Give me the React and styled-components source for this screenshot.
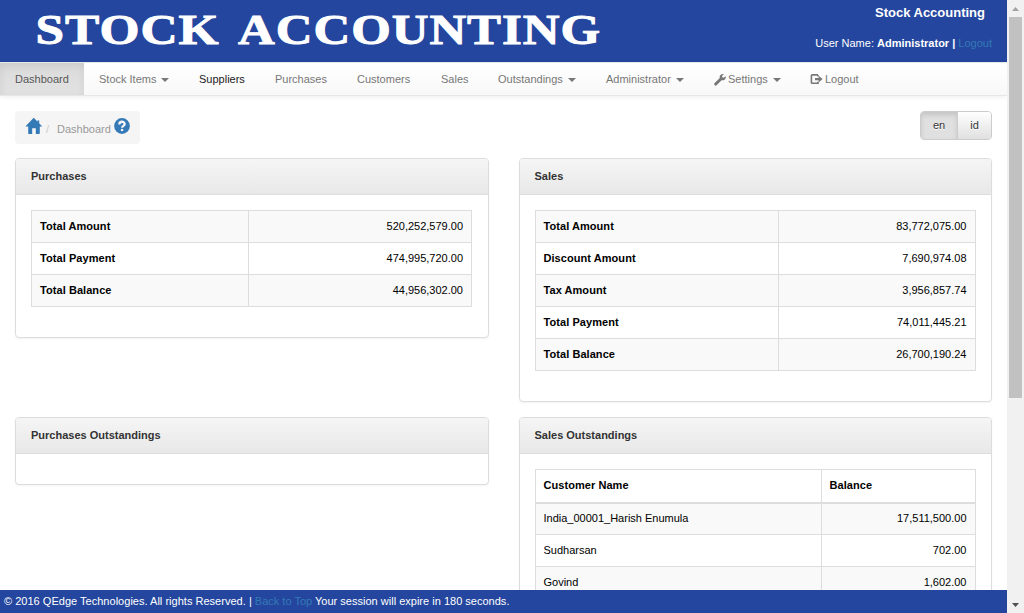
import React from "react";
import styled, { createGlobalStyle } from "styled-components";

const Global = createGlobalStyle`
  *, *::before, *::after { box-sizing: border-box; }
  html, body { margin: 0; height: 100%; overflow: hidden; }
  body {
    background: #fff;
    color: #000;
    font: 11px/15px "Liberation Sans", Arial, sans-serif;
  }
`;

const Window = styled.div`
  display: flex;
  width: 1024px;
  height: 613px;
`;

const Page = styled.div`
  display: flex;
  flex-direction: column;
  width: 1007px;
  height: 613px;
`;

const Header = styled.header`
  display: flex;
  flex: none;
  justify-content: space-between;
  height: 62px;
  background: #24469e;
  color: #fff;
`;

const LogoArt = styled.svg`
  display: block;
  width: 640px;
  height: 62px;
  fill: #fff;
  stroke: #fff;
  stroke-width: 0.9px;
  font-family: "Liberation Serif", "Times New Roman", serif;
  font-weight: 700;
`;

const Account = styled.div`
  display: flex;
  flex-direction: column;
  align-items: flex-end;
  padding: 5px 15px 0 0;
`;

const SiteName = styled.div`
  margin: 0 7px 16px 0;
  font-size: 13px;
  font-weight: 700;
`;

const Txt = styled.span`
  letter-spacing: ${(p) => p.$ls || 0}px;
  font-weight: ${(p) => (p.$bold ? 700 : 400)};
  white-space: pre;
`;

const Link = styled.a`
  color: #337ab7;
`;

const Nav = styled.nav`
  display: flex;
  flex: none;
  height: 34px;
  border-top: 1px solid #e7e7e7;
  border-bottom: 1px solid #e7e7e7;
  background: linear-gradient(to bottom, #fff 0%, #f8f8f8 100%);
  box-shadow: 0 1px 5px rgba(0, 0, 0, 0.075);
`;

const NavItem = styled.a`
  display: flex;
  align-items: center;
  width: ${(p) => p.$w}px;
  padding: 1px 0 0 15px;
  white-space: nowrap;
  color: ${(p) => (p.$active ? "#555" : p.$dark ? "#222" : "#777")};
  text-shadow: 0 1px 0 rgba(255, 255, 255, 0.25);
  ${(p) =>
    p.$active &&
    `background: linear-gradient(to bottom, #dbdbdb, #e2e2e2);
     box-shadow: inset 0 3px 9px rgba(0, 0, 0, 0.075);`}
`;

const Caret = styled.i`
  width: 0;
  height: 0;
  margin: 1px 0 0 5px;
  border-top: 4px solid currentColor;
  border-left: 4px solid transparent;
  border-right: 4px solid transparent;
`;

const Glyph = styled.svg`
  display: block;
  flex: none;
  width: ${(p) => p.$size}px;
  height: ${(p) => p.$size}px;
  margin-right: ${(p) => p.$gap || 0}px;
  margin-top: ${(p) => p.$drop || 0}px;
  fill: currentColor;
`;

const Content = styled.main`
  flex: 1;
  min-height: 0;
  overflow: hidden;
  padding: 15px 15px 0;
`;

const TopBar = styled.div`
  display: flex;
  justify-content: space-between;
  align-items: flex-start;
  height: 47px;
`;

const Breadcrumb = styled.div`
  display: flex;
  width: 125px;
  height: 33px;
  padding: 6px 0 0 10px;
  border-radius: 4px;
  background: #f5f5f5;
  color: #337ab7;
`;

const Crumb = styled.span`
  width: ${(p) => p.$w}px;
  padding-top: 5px;
  color: ${(p) => p.$color};
`;

const Toggle = styled.div`
  display: flex;
  width: 72px;
  height: 29px;
  border: 1px solid #ccc;
  border-radius: 4px;
  overflow: hidden;
`;

const ToggleButton = styled.button`
  width: ${(p) => p.$w}px;
  padding: 0;
  border: 0;
  border-left: ${(p) => (p.$active ? 0 : "1px solid #ccc")};
  font: inherit;
  color: #333;
  text-shadow: 0 1px 0 #fff;
  background: ${(p) =>
    p.$active ? "#e0e0e0" : "linear-gradient(to bottom, #fff, #e0e0e0)"};
  box-shadow: ${(p) =>
    p.$active ? "inset 0 3px 5px rgba(0,0,0,.125)" : "none"};
`;

const Panels = styled.div`
  display: grid;
  grid-template-columns: 1fr 1fr;
  gap: 15px 30px;
  align-items: start;
`;

const PanelBox = styled.section`
  border: 1px solid #ddd;
  border-radius: 4px;
  background: #fff;
  box-shadow: 0 1px 2px rgba(0, 0, 0, 0.05);
`;

const PanelHead = styled.h3`
  margin: 0;
  height: 36px;
  padding: 10px 15px;
  border-bottom: 1px solid #ddd;
  border-radius: 3px 3px 0 0;
  background: linear-gradient(to bottom, #f5f5f5, #e8e8e8);
  color: #333;
  font-size: 11px;
  line-height: 15px;
`;

const PanelBody = styled.div`
  padding: 15px;
`;

const Table = styled.table`
  width: 441px;
  margin-bottom: 15px;
  border-collapse: collapse;
  table-layout: fixed;
`;

const Row = styled.tr`
  height: ${(p) => (p.$head ? 33 : 32)}px;
  background: ${(p) => (p.$striped ? "#f9f9f9" : "#fff")};
`;

const Cell = styled.td`
  width: ${(p) => (p.$w ? `${p.$w}px` : "auto")};
  padding: 0 8px;
  border: 1px solid #ddd;
  border-bottom-width: ${(p) => (p.$head ? 2 : 1)}px;
  font-weight: ${(p) => (p.$bold ? 700 : 400)};
  text-align: ${(p) => (p.$right ? "right" : "left")};
  letter-spacing: ${(p) => (p.$bold ? 0.06 : 0)}px;
  white-space: nowrap;
`;

const Footer = styled.footer`
  flex: none;
  height: 23px;
  padding: 4px;
  background: #24469e;
  color: #fff;
  white-space: pre;
`;

const Scrollbar = styled.div`
  display: flex;
  flex-direction: column;
  align-items: center;
  width: 17px;
  height: 613px;
  background: #f1f1f1;
`;

const ScrollArrow = styled.div`
  display: flex;
  align-items: center;
  justify-content: center;
  width: 17px;
  height: 17px;
  color: ${(p) => (p.$muted ? "#a3a3a3" : "#505050")};
`;

const Thumb = styled.div`
  width: 13px;
  height: 381px;
  margin-bottom: auto;
  background: #c1c1c1;
`;

const HomeIcon = () => (
  <Glyph $size={18} $gap={3} viewBox="0 0 18 18">
    <path d="M8.7 0.8 L17.3 9.6 H14.8 V16.2 Q14.8 17 14 17 H10.8 V11.3 H7.2 V17 H4 Q3.2 17 3.2 16.2 V9.6 H0.4 Z" />
    <path d="M12.4 3.4h1.8v3h-1.8z" />
  </Glyph>
);

const HelpIcon = () => (
  <Glyph $size={16} $drop={1} viewBox="0 0 16 16">
    <circle cx="8" cy="8" r="7.9" />
    <path
      d="M5.3 6.4C5.3 2.9 10.7 2.9 10.7 6.1C10.7 8 8.1 7.7 8.1 9.7"
      fill="none"
      stroke="#f5f5f5"
      strokeWidth="2.3"
    />
    <path fill="#f5f5f5" d="M6.9 10.9h2.3v2.2H6.9z" />
  </Glyph>
);

const WrenchIcon = () => (
  <Glyph $size={12} $gap={2} viewBox="0 0 12 12">
    <path d="M11.8 2.3 9.4 3.7 8.3 3.3 8 2.1 9.9.2C7.9-.3 5.8.9 5.6 2.9L5.8 4.1.7 9C0 9.7 0 10.4.6 11.1s1.5.7 2.2 0L7.6 6.2C9.9 6.8 12.2 4.9 11.8 2.3Z" />
  </Glyph>
);

const ExitIcon = () => (
  <Glyph $size={13} $gap={2} viewBox="0 0 13 12">
    <path
      d="M8 1.4H2.3Q1.4 1.4 1.4 2.3V8.9Q1.4 9.8 2.3 9.8H8V8.3M8 1.4V2.9"
      fill="none"
      stroke="currentColor"
      strokeWidth="1.6"
    />
    <path d="M5 4.6h3.6V2.3L12.6 5.6 8.6 8.9V6.7H5z" />
  </Glyph>
);

const NAV = [
  { label: "Dashboard", w: 84, active: true },
  { label: "Stock Items", w: 100, caret: true },
  { label: "Suppliers", w: 76, dark: true },
  { label: "Purchases", w: 82 },
  { label: "Customers", w: 84 },
  { label: "Sales", w: 57 },
  { label: "Outstandings", w: 108, caret: true },
  { label: "Administrator", w: 108, caret: true },
  { label: "Settings", w: 96, caret: true, icon: <WrenchIcon /> },
  { label: "Logout", w: 78, icon: <ExitIcon /> },
];

const PURCHASES = [
  ["Total Amount", "520,252,579.00"],
  ["Total Payment", "474,995,720.00"],
  ["Total Balance", "44,956,302.00"],
];

const SALES = [
  ["Total Amount", "83,772,075.00"],
  ["Discount Amount", "7,690,974.08"],
  ["Tax Amount", "3,956,857.74"],
  ["Total Payment", "74,011,445.21"],
  ["Total Balance", "26,700,190.24"],
];

const CUSTOMERS = [
  ["India_00001_Harish Enumula", "17,511,500.00"],
  ["Sudharsan", "702.00"],
  ["Govind", "1,602.00"],
];

const Panel = ({ title, children }) => (
  <PanelBox>
    <PanelHead>{title}</PanelHead>
    <PanelBody>{children}</PanelBody>
  </PanelBox>
);

const Rows = ({ rows, first, bold }) =>
  rows.map(([name, value], i) => (
    <Row key={name} $striped={i % 2 === 0}>
      <Cell $w={first} $bold={bold}>{name}</Cell>
      <Cell $right>{value}</Cell>
    </Row>
  ));

export default function App() {
  return (
    <Window>
      <Global />
      <Page>
        <Header>
          <LogoArt viewBox="0 0 640 62">
            <text x="35.5" y="43.5" fontSize="42.5" textLength="184" lengthAdjust="spacingAndGlyphs" letterSpacing="0.8">STOCK</text>
            <text x="238" y="43.5" fontSize="42.5" textLength="363" lengthAdjust="spacingAndGlyphs" letterSpacing="0.8">ACCOUNTING</text>
          </LogoArt>
          <Account>
            <SiteName>Stock Accounting</SiteName>
            <div>
              <Txt>User Name: </Txt>
              <Txt $bold>Administrator | </Txt>
              <Link>Logout</Link>
            </div>
          </Account>
        </Header>
        <Nav>
          {NAV.map((n) => (
            <NavItem key={n.label} $w={n.w} $active={n.active} $dark={n.dark}>
              {n.icon}
              {n.label}
              {n.caret && <Caret />}
            </NavItem>
          ))}
        </Nav>
        <Content>
          <TopBar>
            <Breadcrumb>
              <HomeIcon />
              <Crumb $w={11} $color="#ccc">/</Crumb>
              <Crumb $w={57} $color="#999">Dashboard</Crumb>
              <HelpIcon />
            </Breadcrumb>
            <Toggle>
              <ToggleButton $w={36} $active>en</ToggleButton>
              <ToggleButton $w={34}>id</ToggleButton>
            </Toggle>
          </TopBar>
          <Panels>
            <Panel title="Purchases">
              <Table><tbody><Rows rows={PURCHASES} first={217} bold /></tbody></Table>
            </Panel>
            <Panel title="Sales">
              <Table><tbody><Rows rows={SALES} first={243} bold /></tbody></Table>
            </Panel>
            <Panel title="Purchases Outstandings" />
            <Panel title="Sales Outstandings">
              <Table>
                <tbody>
                  <Row $head>
                    <Cell as="th" $w={286} $bold $head>Customer Name</Cell>
                    <Cell as="th" $bold $head>Balance</Cell>
                  </Row>
                  <Rows rows={CUSTOMERS} />
                </tbody>
              </Table>
            </Panel>
          </Panels>
        </Content>
        <Footer>
          <Txt $ls={0.02}>© 2016 QEdge Technologies. All rights Reserved. | </Txt>
          <Link>Back to Top</Link>
          <Txt $ls={0.01}> Your session will expire in 180 seconds.</Txt>
        </Footer>
      </Page>
      <Scrollbar>
        <ScrollArrow $muted>
          <svg width="7" height="4" viewBox="0 0 7 4" fill="currentColor"><path d="M0 4 3.5 0 7 4z" /></svg>
        </ScrollArrow>
        <Thumb />
        <ScrollArrow>
          <svg width="7" height="4" viewBox="0 0 7 4" fill="currentColor"><path d="M0 0 3.5 4 7 0z" /></svg>
        </ScrollArrow>
      </Scrollbar>
    </Window>
  );
}
